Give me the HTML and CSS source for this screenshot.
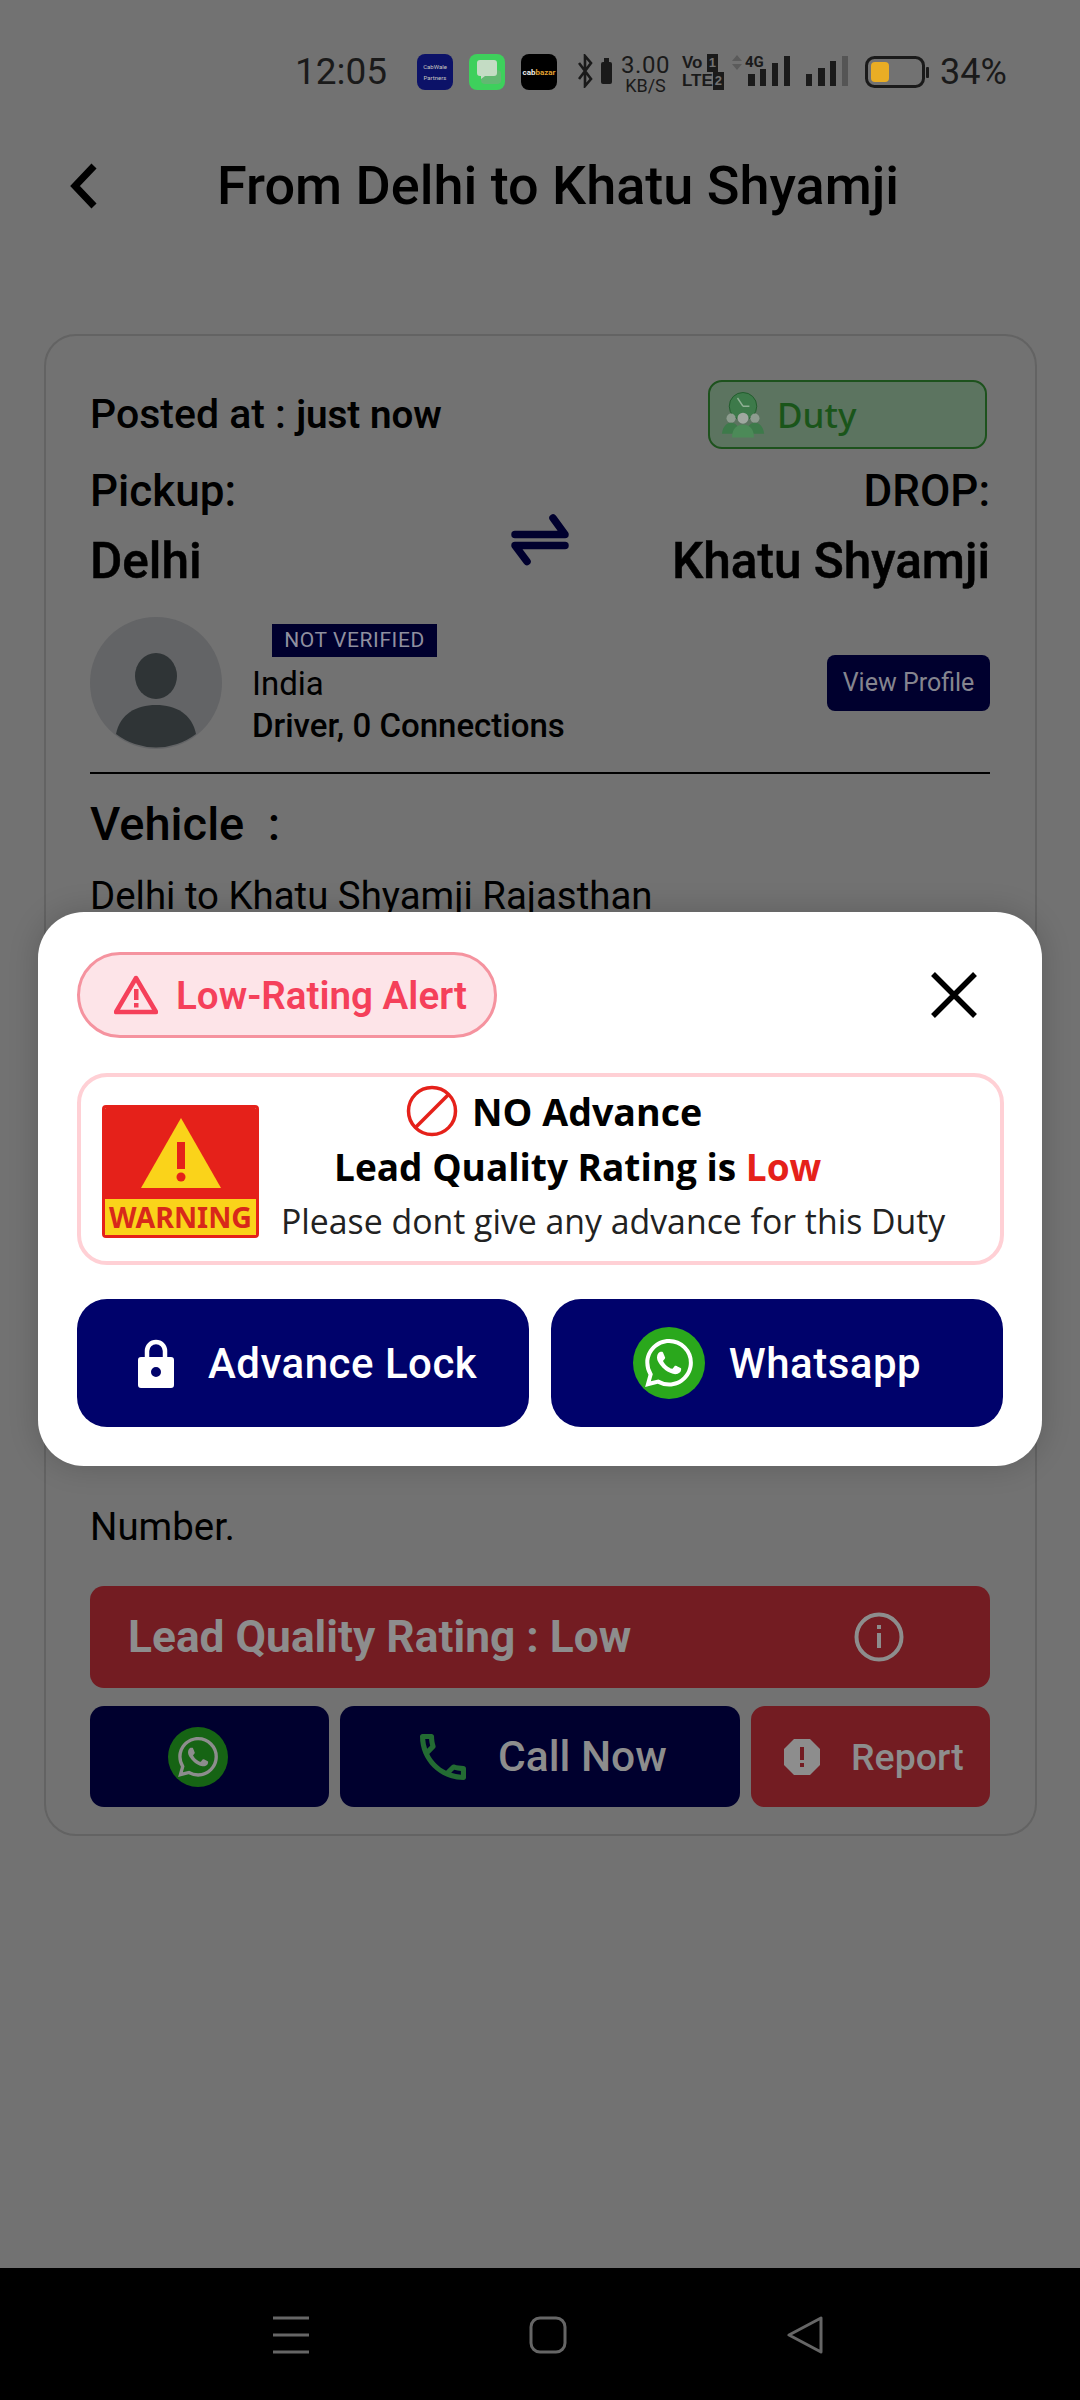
FILE: index.html
```html
<!DOCTYPE html>
<html lang="en">
<head>
    <meta charset="UTF-8">
    <meta name="viewport" content="width=device-width, initial-scale=1.0">
    <title>From Delhi to Khatu Shyamji</title>
    <link rel="stylesheet" href="styles.css">
</head>
<body>
    <svg class="defs" width="0" height="0">
        <symbol id="wa" viewBox="0 0 24 24">
            <path d="M17.472 14.382c-.297-.149-1.758-.867-2.03-.967-.273-.099-.471-.148-.67.15-.197.297-.767.966-.94 1.164-.173.199-.347.223-.644.075-.297-.15-1.255-.463-2.39-1.475-.883-.788-1.48-1.761-1.653-2.059-.173-.297-.018-.458.13-.606.134-.133.298-.347.446-.52.149-.174.198-.298.298-.497.099-.198.05-.371-.025-.52-.075-.149-.669-1.612-.916-2.207-.242-.579-.487-.5-.669-.51-.173-.008-.371-.01-.57-.01-.198 0-.52.074-.792.372-.272.297-1.04 1.016-1.04 2.479 0 1.462 1.065 2.875 1.213 3.074.149.198 2.096 3.2 5.077 4.487.709.306 1.262.489 1.694.625.712.227 1.36.195 1.871.118.571-.085 1.758-.719 2.006-1.413.248-.694.248-1.289.173-1.413-.074-.124-.272-.198-.57-.347m-5.421 7.403h-.004a9.87 9.87 0 01-5.031-1.378l-.361-.214-3.741.982.998-3.648-.235-.374a9.86 9.86 0 01-1.51-5.26c.001-5.45 4.436-9.884 9.888-9.884 2.64 0 5.122 1.03 6.988 2.898a9.825 9.825 0 012.893 6.994c-.003 5.45-4.437 9.884-9.885 9.884m8.413-18.297A11.815 11.815 0 0012.05 0C5.495 0 .16 5.335.157 11.892c0 2.096.547 4.142 1.588 5.945L.057 24l6.305-1.654a11.882 11.882 0 005.683 1.448h.005c6.554 0 11.89-5.335 11.893-11.893a11.821 11.821 0 00-3.48-8.413z"/>
        </symbol>
    </svg>

    <div class="status-bar">
        <span class="clock">12:05</span>
        <span class="app-icon app-cabwale"><span>CabWale</span><span>Partners</span></span>
        <span class="app-icon app-msg">
            <svg width="36" height="36" viewBox="0 0 36 36">
                <rect x="12" y="16" width="20" height="14" rx="4" fill="#62b872"/>
                <path d="M11 6h14a3 3 0 0 1 3 3v10a3 3 0 0 1-3 3h-9l-4 3v-3h-1a3 3 0 0 1-3-3V9a3 3 0 0 1 3-3z" fill="#c4dcc4"/>
            </svg>
        </span>
        <span class="app-icon app-bazar"><b>cab</b><i>bazar</i></span>
        <svg class="st-bt" width="36" height="34" viewBox="0 0 36 34">
            <path d="M1 9l12 16-6 7V2l6 7-12 16" fill="none" stroke="#1a1a1a" stroke-width="2.6"/>
            <rect x="23" y="8" width="11" height="22" rx="2" fill="#1a1a1a"/>
            <rect x="26" y="4" width="5" height="4" fill="#1a1a1a"/>
        </svg>
        <span class="speed"><span>3.00</span><span class="speed-unit">KB/S</span></span>
        <span class="volte">
            <span class="volte-row">Vo<b>1</b></span>
            <span class="volte-row">LTE<b>2</b></span>
        </span>
        <svg class="st-sig" width="60" height="34" viewBox="0 0 60 34">
            <path d="M2 7l5-6 5 6zM2 10l5 6 5-6z" fill="#5b5b5b"/>
            <text x="15" y="13" class="net-4g">4G</text>
            <rect x="18" y="20" width="7" height="12" fill="#1a1a1a"/>
            <rect x="30" y="15" width="6" height="17" fill="#1a1a1a"/>
            <rect x="42" y="9" width="6" height="23" fill="#1a1a1a"/>
            <rect x="54" y="2" width="6" height="30" fill="#1a1a1a"/>
        </svg>
        <svg class="st-sig2" width="42" height="34" viewBox="0 0 42 34">
            <rect x="0" y="20" width="6" height="12" fill="#1a1a1a"/>
            <rect x="12" y="14" width="7" height="18" fill="#1a1a1a"/>
            <rect x="24" y="7" width="6" height="25" fill="#1a1a1a"/>
            <rect x="36" y="2" width="6" height="30" fill="#555"/>
        </svg>
        <svg class="st-batt" width="64" height="32" viewBox="0 0 64 32">
            <rect x="1.5" y="1.5" width="57" height="29" rx="8" fill="none" stroke="#1a1a1a" stroke-width="3"/>
            <rect x="6" y="6" width="18" height="20" rx="4" fill="#e9ad24"/>
            <rect x="61" y="11" width="3" height="11" rx="1" fill="#1a1a1a"/>
        </svg>
        <span class="batt-text">34%</span>
    </div>

    <div class="app-header">
        <svg class="back" width="32" height="48" viewBox="0 0 32 48">
            <path d="M26 4L7 24l19 20" fill="none" stroke="#000" stroke-width="7"/>
        </svg>
        <h1>From Delhi to Khatu Shyamji</h1>
    </div>

    <div class="card">
        <div class="row-top">
            <div class="posted">Posted at : <b>just now</b></div>
            <div class="duty-tag">
                <svg width="44" height="47" viewBox="0 0 48 50">
                    <circle cx="24" cy="16" r="15" fill="#3d7a4a" stroke="#1f5a2a"/>
                    <path d="M24 16l-6-9M24 16h7" stroke="#8fb094" stroke-width="1.5"/>
                    <circle cx="11" cy="29" r="5" fill="#8d9c8f"/><circle cx="37" cy="29" r="5" fill="#8d9c8f"/>
                    <circle cx="24" cy="29" r="6" fill="#a0a8a0"/>
                    <path d="M1 46c1-9 6-12 10-12s9 3 10 12z" fill="#3d7a4a"/>
                    <path d="M27 46c1-9 6-12 10-12s9 3 10 12z" fill="#3d7a4a"/>
                    <path d="M12 50c0-10 6-14 12-14s12 4 12 14z" fill="#4c8a58"/>
                </svg>
                <span>Duty</span>
            </div>
        </div>
        <div class="route">
            <div class="route-col">
                <div class="route-label">Pickup:</div>
                <div class="route-city">Delhi</div>
            </div>
            <svg class="swap" width="58" height="52" viewBox="0 0 58 52">
                <path d="M4 20.5h50L42 4M54 31.5H4l12 16" fill="none" stroke="#00002e" stroke-width="7.5" stroke-linecap="round" stroke-linejoin="round"/>
            </svg>
            <div class="route-col route-right">
                <div class="route-label">DROP:</div>
                <div class="route-city">Khatu Shyamji</div>
            </div>
        </div>
        <div class="profile">
            <svg class="avatar" width="132" height="132" viewBox="0 0 132 132">
                <circle cx="66" cy="66" r="66" fill="#636466"/>
                <ellipse cx="66" cy="59" rx="21" ry="23" fill="#2f3436"/>
                <path d="M26 117c4-20 20-29 40-29s36 9 40 29a66 66 0 0 1-80 0z" fill="#2f3436"/>
            </svg>
            <div class="profile-info">
                <span class="badge-nv">NOT VERIFIED</span>
                <div class="country">India</div>
                <div class="role">Driver, 0 Connections</div>
            </div>
            <div class="view-profile">View Profile</div>
        </div>
        <div class="vehicle-title">Vehicle&nbsp; :</div>
        <div class="vehicle-text">Delhi to Khatu Shyamji Rajasthan</div>
        <div class="note">Number.</div>
        <div class="rating-bar">
            <span>Lead Quality Rating : Low</span>
            <svg width="50" height="50" viewBox="0 0 50 50">
                <circle cx="25" cy="25" r="22.5" fill="none" stroke="#8d8d8d" stroke-width="4"/>
                <rect x="23" y="21" width="4" height="15" fill="#8d8d8d"/>
                <rect x="23" y="13" width="4" height="4" fill="#8d8d8d"/>
            </svg>
        </div>
        <div class="actions">
            <div class="act act-wa">
                <span class="wa-dot wa-dim"><svg width="40" height="40"><use href="#wa"/></svg></span>
            </div>
            <div class="act act-call">
                <svg width="46" height="46" viewBox="3 3 18 18"><path fill="#236b33" d="M6.54 5c.06.89.21 1.76.45 2.59l-1.2 1.2c-.41-1.2-.67-2.47-.76-3.79h1.51m9.86 12.02c.85.24 1.72.39 2.6.45v1.49c-1.32-.09-2.59-.35-3.8-.75l1.2-1.19M7.5 3H4c-.55 0-1 .45-1 1 0 9.39 7.61 17 17 17 .55 0 1-.45 1-1v-3.49c0-.55-.45-1-1-1-1.24 0-2.45-.2-3.57-.57-.1-.04-.21-.05-.31-.05-.26 0-.51.1-.71.29l-2.2 2.2c-2.83-1.45-5.15-3.76-6.59-6.59l2.2-2.2c.28-.28.36-.67.25-1.02C8.7 6.45 8.5 5.25 8.5 4c0-.55-.45-1-1-1z"/></svg>
                <span>Call Now</span>
            </div>
            <div class="act act-report">
                <svg width="38" height="38" viewBox="0 0 38 38">
                    <path d="M11 1h16l10 10v16L27 37H11L1 27V11z" fill="#8d8d8d"/>
                    <rect x="17" y="9" width="4" height="13" fill="#731c22"/>
                    <rect x="17" y="25" width="4" height="4" fill="#731c22"/>
                </svg>
                <span>Report</span>
            </div>
        </div>
    </div>

    <div class="nav-bar">
        <svg width="36" height="38" viewBox="0 0 36 38">
            <path d="M0 2h36M0 19h36M0 36h36" stroke="#666" stroke-width="3"/>
        </svg>
        <svg width="38" height="38" viewBox="0 0 38 38">
            <rect x="2" y="2" width="34" height="34" rx="9" fill="none" stroke="#666" stroke-width="3"/>
        </svg>
        <svg width="38" height="38" viewBox="0 0 38 38">
            <path d="M2 19L34 2v34z" fill="none" stroke="#666" stroke-width="3" stroke-linejoin="round"/>
        </svg>
    </div>

    <!-- Low rating popup, sits over the card -->
    <div class="modal">
        <div class="modal-head">
            <div class="alert-pill">
                <svg width="44" height="40" viewBox="0 0 44 40">
                    <path d="M22 3L2 37h40z" fill="none" stroke="#f5405a" stroke-width="4.5" stroke-linejoin="round"/>
                    <rect x="20" y="14" width="4.5" height="11" fill="#f5405a"/>
                    <rect x="20" y="28" width="4.5" height="4.5" fill="#f5405a"/>
                </svg>
                <span>Low-Rating Alert</span>
            </div>
            <svg class="close" width="46" height="46" viewBox="0 0 46 46">
                <path d="M2 2l42 42M44 2L2 44" stroke="#000" stroke-width="5.5"/>
            </svg>
        </div>
        <div class="warn-box">
            <div class="warn-sign">
                <div class="warn-top">
                    <svg width="82" height="72" viewBox="0 0 82 72">
                        <path d="M41 0l40 70H1z" fill="#fad31a"/>
                        <rect x="37" y="24" width="8" height="27" fill="#e5211a"/>
                        <circle cx="41" cy="59" r="4.5" fill="#e5211a"/>
                    </svg>
                </div>
                <div class="warn-bottom">WARNING</div>
            </div>
            <div class="warn-text">
                <div class="warn-line1">
                    <svg width="52" height="52" viewBox="0 0 52 52">
                        <circle cx="26" cy="26" r="23.5" fill="none" stroke="#e5211a" stroke-width="3.5"/>
                        <path d="M9 43L43 9" stroke="#e5211a" stroke-width="3.5"/>
                    </svg>
                    <span>NO Advance</span>
                </div>
                <div class="warn-line2">Lead Quality Rating is <span class="low">Low</span></div>
                <div class="warn-line3">Please dont give any advance for this Duty</div>
            </div>
        </div>
        <div class="modal-btns">
            <div class="m-btn m-btn-lock">
                <svg width="36" height="50" viewBox="0 0 36 50">
                    <path d="M9 22v-9a9 9 0 0 1 18 0v9" fill="none" stroke="#fff" stroke-width="4.5"/>
                    <path fill-rule="evenodd" d="M3 19h30a3 3 0 0 1 3 3v25a3 3 0 0 1-3 3H3a3 3 0 0 1-3-3V22a3 3 0 0 1 3-3zm15 10a5 5 0 1 0 0 10 5 5 0 0 0 0-10z" fill="#fff"/>
                </svg>
                <span>Advance Lock</span>
            </div>
            <div class="m-btn">
                <span class="wa-dot"><svg width="48" height="48"><use href="#wa"/></svg></span>
                <span>Whatsapp</span>
            </div>
        </div>
    </div>
</body>
</html>
```

FILE: styles.css
```css
* {
    box-sizing: border-box;
}
html, body {
    margin: 0;
    padding: 0;
}
body {
    position: relative;
    width: 1080px;
    height: 2400px;
    overflow: hidden;
    background-color: #727272;
    font-family: Roboto, sans-serif;
    color: #000;
    display: flex;
    flex-direction: column;
}
.defs {
    position: absolute;
}

/* status bar */
.status-bar {
    height: 144px;
    padding: 54px 0 0 295px;
    display: flex;
    align-items: flex-start;
    color: #1a1a1a;
    flex-shrink: 0;
}
.clock {
    width: 122px;
    font-size: 37px;
    line-height: 36px;
}
.app-icon {
    width: 36px;
    height: 36px;
    margin-right: 16px;
    border-radius: 8px;
    display: flex;
    flex-direction: column;
    align-items: center;
    justify-content: center;
    overflow: hidden;
}
.app-cabwale {
    background-color: #0c1268;
    color: #c8c8c0;
    font-size: 6px;
    line-height: 11px;
}
.app-msg {
    background-color: #3ed05c;
}
.app-bazar {
    flex-direction: row;
    background-color: #000;
    font-size: 8px;
    color: #eee;
    margin-right: 21px;
}
.app-bazar i {
    color: #e0a030;
    font-style: normal;
    font-weight: bold;
}
.speed {
    width: 49px;
    margin-left: 7px;
    display: flex;
    flex-direction: column;
    align-items: center;
    font-size: 24px;
    letter-spacing: 0.5px;
    line-height: 23px;
}
.speed-unit {
    font-size: 18px;
    letter-spacing: 0;
    line-height: 18px;
}
.volte {
    width: 36px;
    margin-left: 12px;
    display: flex;
    flex-direction: column;
    font-family: "Liberation Sans Narrow", "Liberation Sans", sans-serif;
    font-weight: bold;
    font-size: 17px;
    line-height: 18px;
}
.volte-row {
    display: flex;
    justify-content: space-between;
}
.volte-row b {
    background-color: #1a1a1a;
    color: #727272;
    padding: 0 2px;
    font-size: 13px;
}
.st-sig {
    margin-left: 12px;
}
.net-4g {
    font-size: 15px;
    font-weight: bold;
    fill: #1a1a1a;
}
.st-sig2 {
    margin-left: 16px;
}
.st-batt {
    margin-left: 17px;
    margin-top: 2px;
}
.batt-text {
    margin-left: 11px;
    font-size: 36px;
    line-height: 36px;
}

/* header */
.app-header {
    height: 190px;
    padding-left: 68px;
    display: flex;
    align-items: flex-start;
    flex-shrink: 0;
}
.back {
    margin-top: 18px;
}
.app-header h1 {
    margin: 0 0 0 117px;
    font-size: 54px;
    line-height: 84px;
    font-weight: 500;
}

/* card behind the popup */
.card {
    margin-left: 44px;
    width: 993px;
    height: 1502px;
    padding: 44px 45px 0 44px;
    border: 2px solid #636363;
    border-radius: 32px;
    flex-shrink: 0;
}
.row-top {
    display: flex;
    justify-content: space-between;
    align-items: center;
    height: 68px;
    padding-right: 3px;
}
.posted {
    font-size: 41px;
    font-weight: 500;
}
.posted b {
    font-size: 38.6px;
    font-weight: 600;
}
.duty-tag {
    width: 279px;
    height: 69px;
    padding-left: 11px;
    display: flex;
    align-items: center;
    gap: 12px;
    background-color: #5c7460;
    border: 2px solid #1d521d;
    border-radius: 14px;
    color: #1a551a;
    font-family: "Noto Sans", sans-serif;
    font-size: 35px;
    font-weight: 500;
}
.route {
    margin-top: 18px;
    display: flex;
    align-items: flex-end;
}
.route-col {
    flex: 1;
}
.route-label {
    font-size: 44px;
    line-height: 50px;
    font-weight: 500;
}
.route-city {
    margin-top: 18px;
    font-size: 49.5px;
    line-height: 54px;
    font-weight: 500;
    -webkit-text-stroke: 0.5px #000;
    white-space: nowrap;
}
.route-right {
    text-align: right;
}
.swap {
    margin-bottom: 22px;
    flex-shrink: 0;
}
.profile {
    margin-top: 29px;
    height: 157px;
    padding-bottom: 24px;
    display: flex;
    align-items: center;
    border-bottom: 2px solid #000;
}
.profile-info {
    margin-left: 30px;
    flex: 1;
    padding-top: 5px;
}
.badge-nv {
    display: block;
    width: 165px;
    height: 33px;
    margin-left: 20px;
    background-color: #00002e;
    color: #8f8f9f;
    font-size: 21px;
    letter-spacing: 0.6px;
    line-height: 33px;
    text-align: center;
}
.country {
    font-size: 33px;
    line-height: 44px;
    margin-top: 5px;
}
.role {
    font-size: 33px;
    line-height: 40px;
    font-weight: 500;
}
.view-profile {
    width: 163px;
    height: 56px;
    background-color: #00002e;
    color: #85858f;
    border-radius: 8px;
    font-size: 25px;
    line-height: 56px;
    text-align: center;
}
.vehicle-title {
    margin-top: 23px;
    font-size: 47px;
    line-height: 54px;
    font-weight: 500;
}
.vehicle-text {
    margin-top: 23px;
    font-size: 38.4px;
    line-height: 44px;
}
.note {
    margin-top: 587px;
    font-size: 38.4px;
    line-height: 44px;
}
.rating-bar {
    margin-top: 37px;
    height: 102px;
    padding: 0 86px 0 38px;
    display: flex;
    justify-content: space-between;
    align-items: center;
    background-color: #731c22;
    border-radius: 14px;
    color: #8d8d8d;
    font-size: 44.3px;
    font-weight: 700;
}
.actions {
    margin-top: 18px;
    display: flex;
    gap: 11px;
}
.act {
    height: 101px;
    border-radius: 14px;
    display: flex;
    align-items: center;
    color: #8d8d8d;
}
.act-wa {
    width: 239px;
    background-color: #00002e;
    padding-left: 78px;
}
.act-call {
    width: 400px;
    background-color: #00002e;
    padding-left: 80px;
    gap: 32px;
    font-size: 42.5px;
    font-weight: 500;
}
.act-report {
    width: 239px;
    background-color: #731c22;
    padding-left: 32px;
    gap: 30px;
    font-size: 37.5px;
    font-weight: 500;
}
.wa-dot {
    width: 72px;
    height: 72px;
    border-radius: 50%;
    background-color: #2aa81c;
    display: flex;
    align-items: center;
    justify-content: center;
    fill: #fff;
}
.wa-dim {
    width: 60px;
    height: 60px;
    background-color: #166414;
    fill: #8d8d8d;
}

/* bottom nav */
.nav-bar {
    position: absolute;
    left: 0;
    right: 0;
    bottom: 0;
    height: 132px;
    padding: 48px 255px 0 273px;
    display: flex;
    justify-content: space-between;
    align-items: flex-start;
    background-color: #000;
}

/* popup */
.modal {
    position: absolute;
    left: 38px;
    top: 912px;
    width: 1004px;
    height: 554px;
    padding: 40px 38px 0 39px;
    background-color: #fff;
    border-radius: 46px;
    box-shadow: 0 0 30px rgba(0, 0, 0, 0.18);
}
.modal-head {
    display: flex;
    justify-content: space-between;
    align-items: center;
    height: 86px;
    padding-right: 27px;
}
.alert-pill {
    width: 420px;
    height: 86px;
    padding-left: 34px;
    display: flex;
    align-items: center;
    gap: 18px;
    background-color: #fde4e8;
    border: 3px solid #f5939f;
    border-radius: 43px;
    color: #f5405a;
    font-size: 38.6px;
    font-weight: 600;
}
.warn-box {
    margin-top: 35px;
    height: 192px;
    padding-left: 21px;
    display: flex;
    align-items: center;
    border: 4px solid #ffd0d5;
    border-radius: 30px;
}
.warn-sign {
    width: 157px;
    height: 133px;
    margin-top: 5px;
    flex-shrink: 0;
    border: 3px solid #e5211a;
    border-radius: 4px;
    overflow: hidden;
    display: flex;
    flex-direction: column;
}
.warn-top {
    height: 91px;
    flex-shrink: 0;
    background-color: #e5211a;
    display: flex;
    justify-content: center;
    align-items: flex-end;
    padding-bottom: 9px;
}
.warn-bottom {
    flex: 1;
    background-color: #fad31a;
    color: #d8281a;
    font-family: "Noto Sans", sans-serif;
    font-weight: 700;
    font-size: 28.5px;
    line-height: 36px;
    text-align: center;
}
.warn-text {
    flex: 1;
    margin-top: -4px;
    font-family: "Open Sans", sans-serif;
    display: flex;
    flex-direction: column;
    align-items: flex-start;
}
.warn-line1 {
    height: 54px;
    margin: -2px 0 2px 147px;
    display: flex;
    align-items: center;
    gap: 14px;
    font-size: 37.6px;
    font-weight: 700;
}
.warn-line2 {
    margin-left: 75px;
    font-size: 37px;
    line-height: 54px;
    font-weight: 700;
}
.low {
    color: #e5211a;
}
.warn-line3 {
    margin-left: 22px;
    font-size: 33.8px;
    line-height: 54px;
    color: #222;
}
.modal-btns {
    margin-top: 34px;
    display: flex;
    gap: 22px;
}
.m-btn {
    width: 452px;
    height: 128px;
    display: flex;
    align-items: center;
    justify-content: center;
    gap: 24px;
    background-color: #00026b;
    border-radius: 30px;
    color: #fff;
    font-size: 42px;
    font-weight: 500;
    letter-spacing: 0.5px;
}
.m-btn-lock {
    justify-content: flex-start;
    padding-left: 61px;
    gap: 34px;
}
```
